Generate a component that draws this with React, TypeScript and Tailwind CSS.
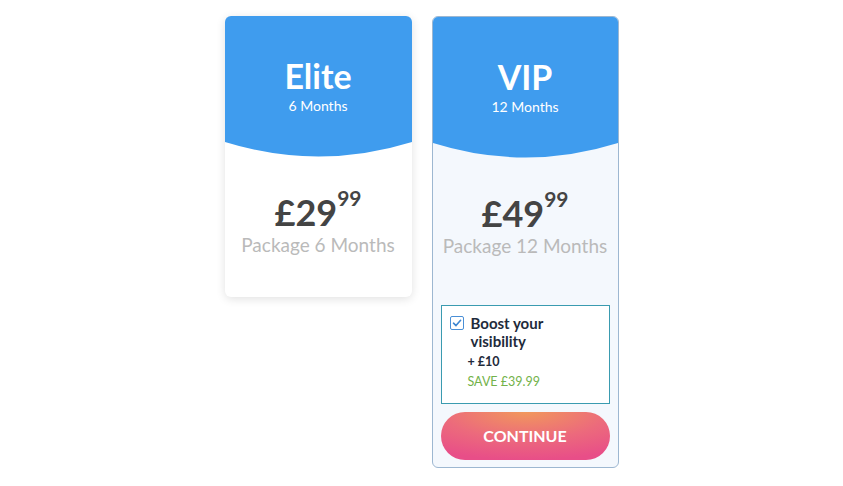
import React from 'react';

const font = { fontFamily: 'Lato, "Open Sans", sans-serif' };

function Header({ title, months }: { title: string; months: string }) {
  return (
    <div>
      <div className="flex h-[124px] flex-col items-center bg-[#3f9cee] pt-[43px] text-white">
        <div className="text-[34px] leading-none font-bold">{title}</div>
        <div className="mt-[3px] text-[14px] leading-5">{months}</div>
      </div>
      {/* curved bottom of the blue header */}
      <svg width="100%" height="18" viewBox="0 0 187 18" preserveAspectRatio="none" className="block">
        <path d="M0 0 H187 V2 Q93.5 31 0 2 Z" fill="#3f9cee" />
      </svg>
    </div>
  );
}

function Price({ pounds, pence, label }: { pounds: string; pence: string; label: string }) {
  return (
    <div className="flex flex-col items-center">
      <div className="mt-[32px] flex items-start text-[#444]">
        <span className="text-[36px] leading-[44px] font-bold">£{pounds}</span>
        <span className="mt-[-4px] text-[21px] leading-6 font-bold">{pence}</span>
      </div>
      <div className="mt-[-1px] text-[19px] leading-6 text-[#bababa]">{label}</div>
    </div>
  );
}

export default function App() {
  return (
    <div className="flex min-h-screen items-start justify-center gap-5 bg-white pt-4" style={font}>
      <div className="h-[281px] w-[187px] overflow-hidden rounded-md bg-white shadow-[0_2px_10px_rgba(0,0,0,0.12)]">
        <Header title="Elite" months="6 Months" />
        <Price pounds="29" pence="99" label="Package 6 Months" />
      </div>

      <div className="flex h-[452px] w-[187px] flex-col overflow-hidden rounded-md border border-[#9db7d1] bg-[#f4f8fd]">
        <Header title="VIP" months="12 Months" />
        <Price pounds="49" pence="99" label="Package 12 Months" />
        <div className="flex-1" />
        <div className="mx-2 flex flex-col border border-[#3a9bb0] bg-white px-2 pt-[8px] pb-[11px]">
          <div className="flex items-start gap-[7px]">
            <span className="mt-[2px] flex h-[14px] w-[14px] shrink-0 items-center justify-center rounded-[2px] border border-[#4a8fd6] bg-white">
              <svg width="10" height="10" viewBox="0 0 10 10">
                <path d="M1.5 5.2 L4 7.6 L8.6 2.3" fill="none" stroke="#3d86d1" strokeWidth="1.6" strokeLinecap="round" strokeLinejoin="round" />
              </svg>
            </span>
            <div className="text-[15px] leading-[18px] font-bold text-[#1f2b3b]">
              Boost your
              <br />
              visibility
            </div>
          </div>
          <div className="mt-[2px] pl-[18px] text-[12.5px] leading-5 font-bold text-[#1f2b3b]">+ £10</div>
          <div className="pl-[18px] text-[12.5px] leading-5 text-[#72b24a]">SAVE £39.99</div>
        </div>
        <button className="mx-2 mt-2 mb-[7px] h-[48px] rounded-full bg-[radial-gradient(ellipse_90%_100%_at_50%_0%,#f1975c_0%,#ec6a7c_55%,#e84e88_100%)] text-[16px] font-bold text-white">
          CONTINUE
        </button>
      </div>
    </div>
  );
}
